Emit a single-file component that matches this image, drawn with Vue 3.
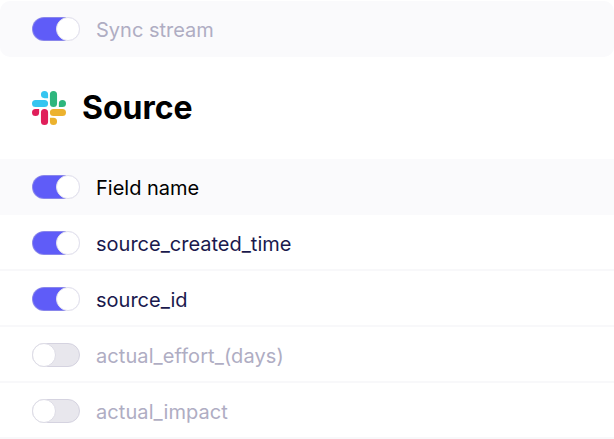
<script setup>
const fields = [
  { name: 'source_created_time', on: true },
  { name: 'source_id', on: true },
  { name: 'actual_effort_(days)', on: false },
  { name: 'actual_impact', on: false },
]
</script>

<template>
  <main class="panel">
    <div class="row sync">
      <span class="toggle on"><span class="knob"></span></span>
      <span class="label muted">Sync stream</span>
    </div>
    <header class="source">
      <svg class="logo" viewBox="0 0 24 24" aria-hidden="true">
        <path fill="#e01e5a" d="M5.042 15.165a2.528 2.528 0 0 1-2.52 2.523A2.528 2.528 0 0 1 0 15.165a2.527 2.527 0 0 1 2.522-2.52h2.52v2.52zM6.313 15.165a2.527 2.527 0 0 1 2.521-2.52 2.527 2.527 0 0 1 2.521 2.52v6.313A2.528 2.528 0 0 1 8.834 24a2.528 2.528 0 0 1-2.521-2.522v-6.313z" />
        <path fill="#36c5f0" d="M8.834 5.042a2.528 2.528 0 0 1-2.521-2.52A2.528 2.528 0 0 1 8.834 0a2.528 2.528 0 0 1 2.521 2.522v2.52H8.834zM8.834 6.313a2.528 2.528 0 0 1 2.521 2.521 2.528 2.528 0 0 1-2.521 2.521H2.522A2.528 2.528 0 0 1 0 8.834a2.528 2.528 0 0 1 2.522-2.521h6.312z" />
        <path fill="#2eb67d" d="M18.956 8.834a2.528 2.528 0 0 1 2.522-2.521A2.528 2.528 0 0 1 24 8.834a2.528 2.528 0 0 1-2.522 2.521h-2.522V8.834zM17.688 8.834a2.528 2.528 0 0 1-2.523 2.521 2.527 2.527 0 0 1-2.52-2.521V2.522A2.527 2.527 0 0 1 15.165 0a2.528 2.528 0 0 1 2.523 2.522v6.312z" />
        <path fill="#ecb22e" d="M15.165 18.956a2.528 2.528 0 0 1 2.523 2.522A2.528 2.528 0 0 1 15.165 24a2.527 2.527 0 0 1-2.52-2.522v-2.522h2.52zM15.165 17.688a2.527 2.527 0 0 1-2.52-2.523 2.526 2.526 0 0 1 2.52-2.52h6.313A2.527 2.527 0 0 1 24 15.165a2.528 2.528 0 0 1-2.522 2.523h-6.313z" />
      </svg>
      <h1>Source</h1>
    </header>
    <div class="row head">
      <span class="toggle on"><span class="knob"></span></span>
      <span class="label black">Field name</span>
    </div>
    <div v-for="f in fields" :key="f.name" class="row field">
      <span class="toggle" :class="{ on: f.on }"><span class="knob"></span></span>
      <span class="label" :class="{ muted: !f.on }">{{ f.name }}</span>
    </div>
  </main>
</template>

<style>
body {
  background: #fff;
  overflow: hidden;
}
</style>

<style scoped>
.panel {
  box-sizing: border-box;
  height: 439px;
  padding-top: 1px;
  overflow: hidden;
  font-family: Inter, "Liberation Sans", sans-serif;
}
.row {
  box-sizing: border-box;
  display: flex;
  align-items: center;
  gap: 16px;
  height: 56px;
  padding: 0 32px;
}
.sync {
  background: #fafafc;
  border-radius: 10px;
}
.head {
  background: #fafafc;
}
.field {
  border-bottom: 2px solid #f8f8fa;
  padding-top: 2px;
}
.source {
  display: flex;
  align-items: center;
  gap: 16px;
  height: 102px;
  padding-left: 32px;
}
.logo {
  width: 34px;
  height: 34px;
}
h1 {
  margin: 0;
  font-size: 32px;
  line-height: 40px;
  font-weight: 700;
  color: #000;
}
.toggle {
  box-sizing: border-box;
  display: flex;
  width: 48px;
  height: 24px;
  border: 1px solid #d5d3e0;
  border-radius: 12px;
  background: #e8e7ed;
}
.toggle.on {
  justify-content: flex-end;
  background: linear-gradient(90deg, #5f5cf8 70%, #fff 70%);
  background-origin: border-box;
  border-color: rgba(200, 198, 216, 0.4);
}
.knob {
  width: 24px;
  height: 24px;
  margin: -1px;
  box-sizing: border-box;
  border: 1px solid #dddce6;
  border-radius: 50%;
  background: #fff;
}
.on .knob {
  border-color: #e2e1ee;
}
.label {
  font-size: 20px;
  line-height: 28px;
  color: #1a194d;
  padding-top: 2px;
}
.muted {
  color: #afadc3;
}
.field .muted {
  letter-spacing: 0.08px;
}
.black {
  color: #000;
}
</style>
